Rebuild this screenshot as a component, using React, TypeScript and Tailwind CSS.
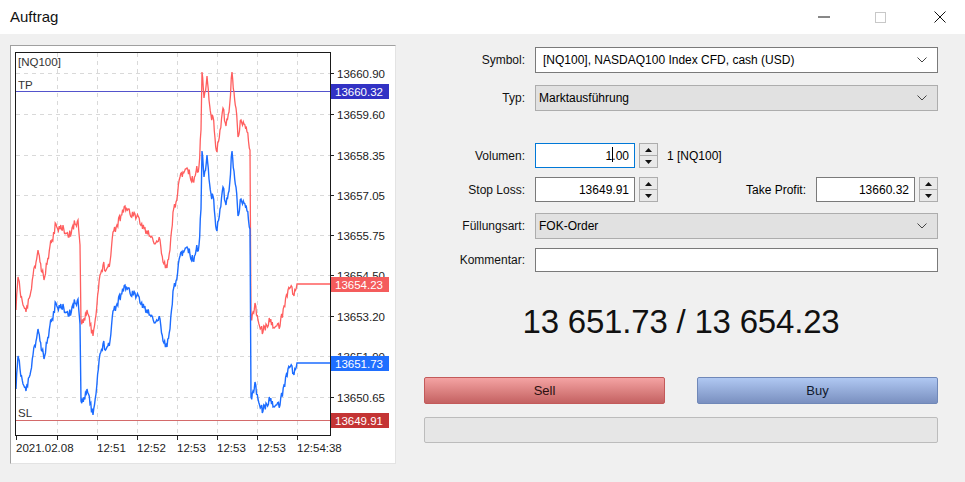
import React from "react";

// key points of the ask (red) line in page coords; bid (blue) sits 79px lower
const ASK_KEYS: [number, number][] = [
  [16, 310], [18, 277], [20, 290], [23, 305], [26, 312], [30, 296], [33, 276], [36, 262],
  [38, 250], [40, 262], [42, 272], [44, 280], [47, 264], [50, 246], [52, 240], [56, 224],
  [60, 229], [63, 225], [66, 233], [69, 237], [72, 228], [75, 224], [78, 220], [80, 245],
  [81, 322], [84, 318], [87, 310], [90, 325], [93, 336], [96, 315], [100, 275], [103, 265],
  [107, 268], [110, 262], [113, 232], [117, 225], [121, 215], [125, 206], [130, 214],
  [135, 214], [140, 224], [145, 228], [150, 236], [155, 244], [160, 240], [163, 262],
  [167, 268], [170, 250], [173, 212], [176, 202], [180, 177], [183, 172], [187, 168],
  [190, 176], [193, 182], [196, 172], [199, 166], [201, 130], [202, 72], [204, 98],
  [207, 76], [209, 100], [211, 115], [213, 117], [215, 138], [217, 152], [220, 130],
  [223, 108], [226, 126], [229, 112], [232, 72], [234, 92], [236, 108], [238, 137],
  [241, 120], [244, 124], [247, 132], [250, 150], [251, 150], [251, 318], [253, 312],
  [255, 303], [258, 320], [261, 328], [263, 332], [266, 324], [270, 322], [273, 328],
  [276, 326], [280, 326], [284, 306], [288, 290], [292, 287], [294, 296], [297, 284],
  [330, 284],
];

function rng(seed: number) {
  let s = seed;
  return () => {
    s = (s * 16807) % 2147483647;
    return s / 2147483647;
  };
}

function buildSeries() {
  const r = rng(11);
  const pts: [number, number][] = [];
  for (let i = 0; i < ASK_KEYS.length - 1; i++) {
    const [x0, y0] = ASK_KEYS[i];
    const [x1, y1] = ASK_KEYS[i + 1];
    const dx = x1 - x0;
    if (dx === 0) {
      pts.push([x1, y1]);
      continue;
    }
    const flat = y0 === y1 && dx > 10;
    const n = flat ? 1 : Math.max(1, Math.round(dx / 0.8));
    for (let k = 0; k < n; k++) {
      const t = k / n;
      let y = y0 + (y1 - y0) * t;
      if (k > 0) y += (r() - 0.5) * 9;
      pts.push([x0 + dx * t, y]);
    }
  }
  pts.push(ASK_KEYS[ASK_KEYS.length - 1]);
  return pts;
}

const ask = buildSeries();
const toPath = (pts: [number, number][], dy: number) =>
  pts.map(([x, y], i) => `${i ? "L" : "M"}${x.toFixed(1)} ${(y + dy).toFixed(1)}`).join(" ");

const priceLabels = [
  [73, "13660.90"], [114, "13659.60"], [155, "13658.35"], [195, "13657.05"],
  [235, "13655.75"], [275, "13654.50"], [316, "13653.20"], [356, "13651.90"], [397, "13650.65"],
] as const;

const vGrid = [57, 97, 137, 177, 217, 257, 297];
const timeLabels = [
  [16, "2021.02.08"], [97, "12:51"], [137, "12:52"], [177, "12:53"],
  [217, "12:53"], [257, "12:53"], [297, "12:54:38"],
] as const;

const tags = [
  [91, "13660.32", "#3232c4"],
  [284, "13654.23", "#f45c5c"],
  [363, "13651.73", "#1f6fff"],
  [420, "13649.91", "#c43434"],
] as const;

function Chart() {
  return (
    <svg width={384} height={417} className="block">
      <g transform="translate(-11,-46)" fontFamily="'Liberation Sans', Arial, sans-serif" fontSize="11.5">
        {priceLabels.map(([y]) => (
          <line key={"h" + y} x1={16} x2={330} y1={y + 0.5} y2={y + 0.5} stroke="#d9d9d9" strokeDasharray="4 4" />
        ))}
        {vGrid.map((x) => (
          <line key={"v" + x} x1={x + 0.5} x2={x + 0.5} y1={53} y2={435} stroke="#d9d9d9" strokeDasharray="4 4" />
        ))}
        <line x1={16} x2={330} y1={91.5} y2={91.5} stroke="#5454cc" />
        <line x1={16} x2={330} y1={420.5} y2={420.5} stroke="#d46a6a" />
        <path d={toPath(ask, 0)} fill="none" stroke="#ff5e5e" strokeWidth={1.3} />
        <path d={toPath(ask, 79)} fill="none" stroke="#1c6cff" strokeWidth={1.4} />
        <rect x={15.5} y={52.5} width={315} height={383} fill="none" stroke="#1a1a1a" />
        <text x={18} y={66} fill="#333">[NQ100]</text>
        <text x={18} y={89} fill="#333">TP</text>
        <text x={18} y={417} fill="#333">SL</text>
        {priceLabels.map(([y, t]) => (
          <g key={t}>
            <line x1={331} x2={334} y1={y + 0.5} y2={y + 0.5} stroke="#222" />
            <text x={337} y={y + 4.5} fill="#222">{t}</text>
          </g>
        ))}
        {tags.map(([y, t, c]) => (
          <g key={t}>
            <rect x={331} y={y - 7} width={58} height={15} fill={c} />
            <text x={335} y={y + 4.5} fill="#fff">{t}</text>
          </g>
        ))}
        {[16, ...vGrid].map((x) => (
          <line key={"t" + x} x1={x + 0.5} x2={x + 0.5} y1={436} y2={440} stroke="#222" />
        ))}
        {timeLabels.map(([x, t], i) => (
          <text key={i} x={x} y={452} fill="#222">{t}</text>
        ))}
      </g>
    </svg>
  );
}

const Chevron = () => (
  <svg width="10" height="6" viewBox="0 0 10 6" className="ml-auto mr-[10px]">
    <polyline points="0.5,0.5 5,5 9.5,0.5" fill="none" stroke="#444" />
  </svg>
);

function Spinner() {
  return (
    <div className="ml-[4px] w-[19px] h-full flex flex-col border border-[#adadad] bg-[#e9e9e9]">
      <div className="flex-1 flex items-center justify-center border-b border-[#adadad]">
        <svg width="7" height="4"><polygon points="3.5,0 7,4 0,4" fill="#111" /></svg>
      </div>
      <div className="flex-1 flex items-center justify-center">
        <svg width="7" height="4"><polygon points="0,0 7,0 3.5,4" fill="#111" /></svg>
      </div>
    </div>
  );
}

function Label({ children }: { children: React.ReactNode }) {
  return <div className="w-[101px] mr-[10px] text-right text-[#111]">{children}</div>;
}

export default function App() {
  return (
    <div className="w-[965px] h-[482px] overflow-hidden bg-[#f0f0f0] text-[12px] text-black font-['Liberation_Sans',Arial,sans-serif]">
      <div className="h-[34px] bg-white flex items-center pl-[10px]">
        <span className="text-[15px] text-[#111]">Auftrag</span>
        <div className="ml-auto flex items-center h-full">
          <svg width="12" height="2" className="mr-[45px]"><line x1="0" x2="12" y1="1" y2="1" stroke="#111" /></svg>
          <svg width="11" height="11" className="mr-[48px]"><rect x="0.5" y="0.5" width="10" height="10" fill="none" stroke="#c8c8c8" /></svg>
          <svg width="12" height="12" className="mr-[19px]">
            <line x1="0.5" y1="0.5" x2="11.5" y2="11.5" stroke="#111" />
            <line x1="11.5" y1="0.5" x2="0.5" y2="11.5" stroke="#111" />
          </svg>
        </div>
      </div>

      <div className="flex pt-[11px]">
        <div className="ml-[10px] w-[386px] h-[419px] bg-white border border-t-[#a0a0a0] border-l-[#a0a0a0] border-r-[#e3e3e3] border-b-[#e3e3e3]">
          <Chart />
        </div>

        <div className="ml-[28px] w-[514px] flex flex-col pt-[2px]">
          <div className="flex items-center h-[26px]">
            <Label>Symbol:</Label>
            <div className="w-[403px] h-full flex items-center bg-white border border-[#7a7a7a] pl-[7px]">
              <span>[NQ100], NASDAQ100 Index CFD, cash (USD)</span>
              <Chevron />
            </div>
          </div>

          <div className="flex items-center h-[26px] mt-[12px]">
            <Label>Typ:</Label>
            <div className="w-[403px] h-full flex items-center bg-[#e1e1e1] border border-[#adadad] pl-[3px]">
              <span>Marktausführung</span>
              <Chevron />
            </div>
          </div>

          <div className="flex items-center h-[25px] mt-[32px]">
            <Label>Volumen:</Label>
            <div className="w-[100px] h-full flex items-center justify-end bg-white border border-[#0078d7] pr-[5px]">
              <span>1</span>
              <span className="relative">
                .
                <span className="absolute left-[0px] top-[0px] w-[1px] h-[15px] bg-black" />
              </span>
              <span>00</span>
            </div>
            <Spinner />
            <span className="ml-[9px]">1 [NQ100]</span>
          </div>

          <div className="flex items-center h-[25px] mt-[9px]">
            <Label>Stop Loss:</Label>
            <div className="w-[100px] h-full flex items-center justify-end bg-white border border-[#7a7a7a] pr-[5px]">
              13649.91
            </div>
            <Spinner />
            <span className="ml-auto mr-[10px]">Take Profit:</span>
            <div className="w-[99px] h-full flex items-center justify-end bg-white border border-[#7a7a7a] pr-[5px]">
              13660.32
            </div>
            <Spinner />
          </div>

          <div className="flex items-center h-[26px] mt-[11px]">
            <Label>Füllungsart:</Label>
            <div className="w-[403px] h-full flex items-center bg-[#e1e1e1] border border-[#adadad] pl-[3px]">
              <span>FOK-Order</span>
              <Chevron />
            </div>
          </div>

          <div className="flex items-center h-[24px] mt-[9px]">
            <Label>Kommentar:</Label>
            <div className="w-[403px] h-full bg-white border border-[#7a7a7a]" />
          </div>

          <div className="h-[44px] mt-[28px] flex items-center justify-center text-[33px] tracking-[-0.2px] text-[#111]">
            13 651.73 / 13 654.23
          </div>

          <div className="flex h-[27px] mt-[33px]">
            <div className="w-[241px] h-full flex items-center justify-center rounded-[2px] border border-[#c35a5a] bg-linear-to-b from-[#f4a3a3] to-[#c46262] text-[13px] text-[#2a1010]">
              Sell
            </div>
            <div className="w-[241px] h-full ml-[32px] flex items-center justify-center rounded-[2px] border border-[#7088b8] bg-linear-to-b from-[#b0c8f2] to-[#7a90c0] text-[13px] text-[#101a2e]">
              Buy
            </div>
          </div>

          <div className="w-[514px] h-[26px] mt-[13px] bg-[#e6e6e6] border border-[#bcbcbc] rounded-[2px]" />
        </div>
      </div>
    </div>
  );
}
